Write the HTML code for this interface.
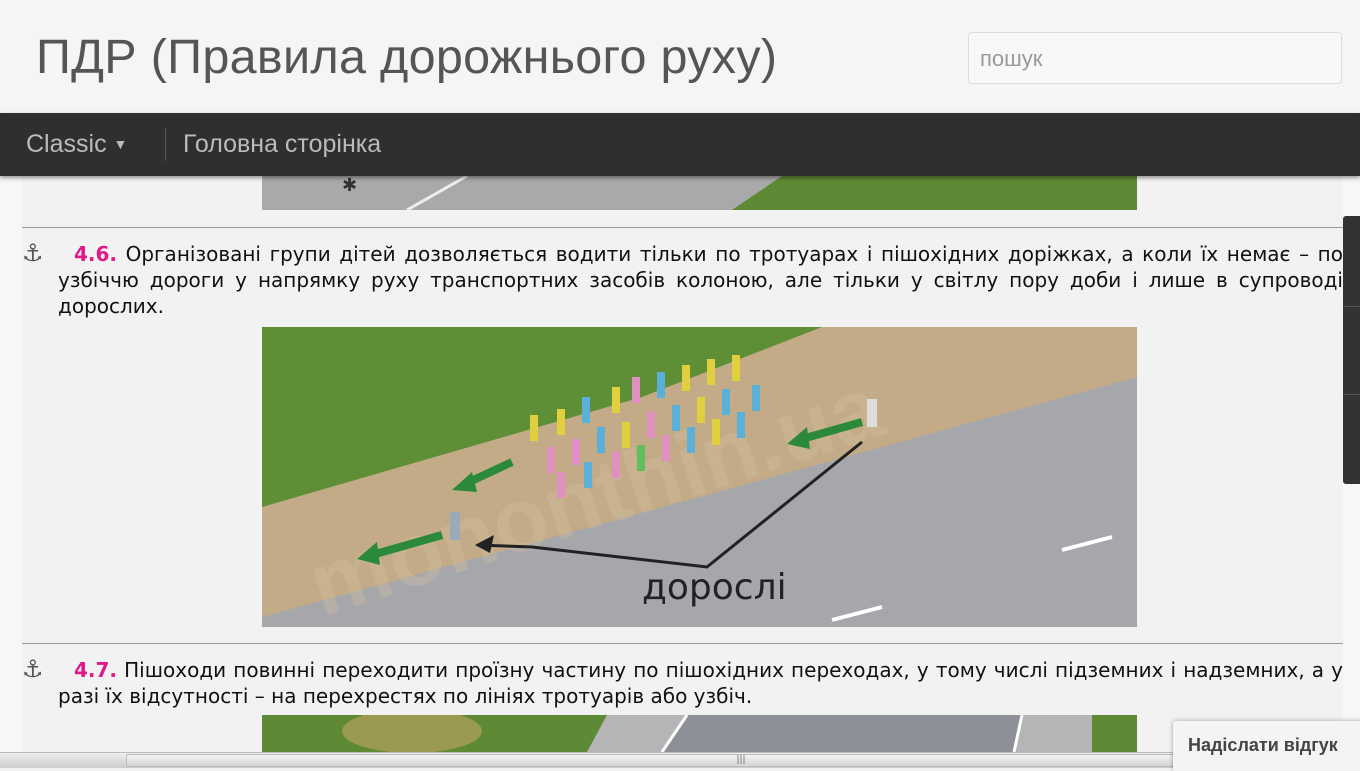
<!DOCTYPE html>
<html><head><meta charset="utf-8"><style>
*{margin:0;padding:0;box-sizing:border-box}
body{width:1360px;height:768px;overflow:hidden;background:#f2f2f2;position:relative;font-family:"DejaVu Sans","Liberation Sans",sans-serif}
#hdr{position:absolute;left:0;top:0;width:1360px;height:113px;background:#f5f5f5}
#hdr h1{position:absolute;left:36px;top:29px;font:400 48.5px "Liberation Sans",sans-serif;color:#555;letter-spacing:0.3px}
#srch{position:absolute;left:968px;top:32px;width:374px;height:52px;border:1px solid #ddd;border-radius:4px;background:#f8f8f8;font:22px "Liberation Sans",sans-serif;color:#999;padding:13px 11px}
#nav{position:absolute;left:0;top:113px;width:1360px;height:63px;background:#2f2f2f;box-shadow:0 2px 4px rgba(0,0,0,.4);z-index:5}
#nav .a{position:absolute;top:17px;font:25px "Liberation Sans",sans-serif;color:#bbb}
#nav .sep{position:absolute;left:165px;top:15px;width:1px;height:33px;background:#555}
#content{position:absolute;left:22px;top:176px;width:1321px;height:576px;background:#f2f2f2;overflow:hidden}
#lm{position:absolute;left:0;top:176px;width:22px;height:576px;background:#f7f7f7}
.hr{position:absolute;left:0;width:1321px;height:1px;background:#999}
.ln{position:absolute;left:36px;width:1285px;font-size:20px;line-height:26px;color:#111;text-align:justify;text-align-last:justify;white-space:nowrap}
.ln.l{text-align-last:left}
.num{color:#e0198a;font-weight:bold;padding-left:16px}
.anc{position:absolute;left:0;font-size:24px;color:#555;font-weight:bold}
#sb{position:absolute;left:1343px;top:216px;width:17px;height:268px;background:#333;border-radius:3px 0 0 3px}
#sb i{position:absolute;left:0;width:17px;height:1px;background:#555}
#rgt{position:absolute;left:1343px;top:176px;width:17px;height:576px;background:#f7f7f7}
#hs{position:absolute;left:0;top:752px;width:1360px;height:16px;background:linear-gradient(#eee,#ccc);border-top:1px solid #bbb}
#hs .th{position:absolute;left:126px;top:1px;width:1230px;height:13px;background:linear-gradient(#f4f4f4,#d4d4d4);border:1px solid #bbb;border-radius:2px;text-align:center;font-size:9px;line-height:11px;color:#666}
#fb{position:absolute;left:1173px;top:721px;width:190px;height:50px;background:#f4f4f4;box-shadow:0 0 5px rgba(0,0,0,.35);border-radius:3px 0 0 0;font:bold 18px "Liberation Sans",sans-serif;color:#444;padding:14px 0 0 15px}
</style></head><body>
<div id="hdr"><h1>ПДР (Правила дорожнього руху)</h1><div id="srch">пошук</div></div>
<div id="nav"><span class="a" style="left:26px">Classic <span style="font-size:14px;position:relative;top:-3px">▼</span></span><div class="sep"></div><span class="a" style="left:183px">Головна сторінка</span></div>
<div id="lm"></div><div id="rgt"></div>
<div id="content">
<svg style="position:absolute;left:240px;top:0" width="875" height="34"><rect width="875" height="34" fill="#a9a9ab"/><polygon points="520,0 875,0 875,34 470,34" fill="#5f8a35"/><line x1="145" y1="34" x2="205" y2="0" stroke="#eee" stroke-width="3"/><text x="80" y="15" font-size="18" fill="#333">✱</text></svg>
<div class="hr" style="top:51px"></div>
<span class="anc" style="top:63px">⚓</span>
<div class="ln" style="top:65px"><span class="num">4.6.</span> Організовані групи дітей дозволяється водити тільки по тротуарах і пішохідних доріжках, а коли їх немає – по</div>
<div class="ln" style="top:91px">узбіччю дороги у напрямку руху транспортних засобів колоною, але тільки у світлу пору доби і лише в супроводі</div>
<div class="ln l" style="top:117px">дорослих.</div>
<svg style="position:absolute;left:240px;top:151px" width="875" height="300">
<rect width="875" height="300" fill="#a5a7ab"/>
<polygon points="0,0 875,0 875,50 0,290" fill="#c4ab88"/>
<polygon points="0,0 560,0 380,70 0,180" fill="#5e8f36"/>
<g fill="#d4c0a0" opacity=".35" font-size="90" font-weight="bold" font-family="Liberation Sans"><text x="60" y="290" transform="rotate(-18 60 290)">mononthin.ua</text></g>
<g>
<rect x="268" y="88" width="8" height="26" fill="#e0d040"/><rect x="295" y="82" width="8" height="26" fill="#e0d040"/><rect x="320" y="70" width="8" height="26" fill="#5ab0d8"/><rect x="350" y="60" width="8" height="26" fill="#e0d040"/><rect x="370" y="50" width="8" height="26" fill="#e090c0"/><rect x="395" y="45" width="8" height="26" fill="#5ab0d8"/><rect x="420" y="38" width="8" height="26" fill="#e0d040"/><rect x="445" y="32" width="8" height="26" fill="#e0d040"/><rect x="470" y="28" width="8" height="26" fill="#e0d040"/>
<rect x="285" y="120" width="8" height="26" fill="#e090c0"/><rect x="310" y="112" width="8" height="26" fill="#e090c0"/><rect x="335" y="100" width="8" height="26" fill="#5ab0d8"/><rect x="360" y="95" width="8" height="26" fill="#e0d040"/><rect x="385" y="85" width="8" height="26" fill="#e090c0"/><rect x="410" y="78" width="8" height="26" fill="#5ab0d8"/><rect x="435" y="70" width="8" height="26" fill="#e0d040"/><rect x="460" y="62" width="8" height="26" fill="#5ab0d8"/><rect x="490" y="58" width="8" height="26" fill="#5ab0d8"/>
<rect x="295" y="145" width="8" height="26" fill="#e090c0"/><rect x="322" y="135" width="8" height="26" fill="#5ab0d8"/><rect x="350" y="125" width="8" height="26" fill="#e090c0"/><rect x="375" y="118" width="8" height="26" fill="#60c060"/><rect x="400" y="108" width="8" height="26" fill="#e090c0"/><rect x="425" y="100" width="8" height="26" fill="#5ab0d8"/><rect x="450" y="92" width="8" height="26" fill="#e0d040"/><rect x="475" y="85" width="8" height="26" fill="#5ab0d8"/>
<rect x="605" y="72" width="10" height="28" fill="#ddd"/><rect x="188" y="185" width="10" height="28" fill="#99aabb"/>
</g>
<polyline points="215,218 270,220 445,240 600,115" fill="none" stroke="#222" stroke-width="3"/>
<polygon points="213,218 232,208 228,226" fill="#222"/>
<line x1="250" y1="135" x2="205" y2="156" stroke="#2a8a3a" stroke-width="8"/><polygon points="190,163 210,145 215,165" fill="#2a8a3a"/>
<line x1="600" y1="95" x2="540" y2="112" stroke="#2a8a3a" stroke-width="8"/><polygon points="525,117 545,100 548,122" fill="#2a8a3a"/>
<line x1="180" y1="208" x2="110" y2="228" stroke="#2a8a3a" stroke-width="8"/><polygon points="95,232 115,215 118,238" fill="#2a8a3a"/>
<text x="380" y="272" font-size="36" fill="#222" font-family="DejaVu Sans">дорослі</text>
<line x1="800" y1="223" x2="850" y2="210" stroke="#fff" stroke-width="4"/><line x1="570" y1="293" x2="620" y2="280" stroke="#fff" stroke-width="4"/>
</svg>
<div class="hr" style="top:467px"></div>
<span class="anc" style="top:479px">⚓</span>
<div class="ln" style="top:481px"><span class="num">4.7.</span> Пішоходи повинні переходити проїзну частину по пішохідних переходах, у тому числі підземних і надземних, а у</div>
<div class="ln l" style="top:507px">разі їх відсутності – на перехрестях по лініях тротуарів або узбіч.</div>
<svg style="position:absolute;left:240px;top:539px" width="875" height="37"><rect width="875" height="37" fill="#5f8a35"/><polygon points="345,0 830,0 830,37 325,37" fill="#b5b5b7"/><polygon points="425,0 760,0 752,37 400,37" fill="#8d9097"/><line x1="425" y1="0" x2="400" y2="37" stroke="#fff" stroke-width="3"/><line x1="760" y1="0" x2="752" y2="37" stroke="#fff" stroke-width="3"/><ellipse cx="150" cy="16" rx="70" ry="22" fill="#9a9a50"/></svg>
</div>
<div id="sb"><i style="top:90px"></i><i style="top:178px"></i></div>
<div id="hs"><div class="th">|||</div></div>
<div id="fb">Надіслати відгук</div>
</body></html>
